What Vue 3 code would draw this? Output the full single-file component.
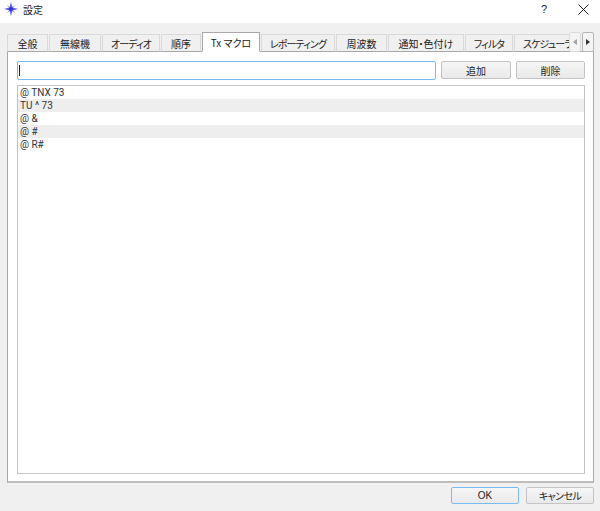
<script setup>
const tabs = [
  { label: '全般', w: 41 },
  { label: '無線機', w: 52 },
  { label: 'オーディオ', w: 58, kana: true },
  { label: '順序', w: 40 },
  { label: 'Tx マクロ', w: 58, active: true },
  { label: 'レポーティング', w: 74, kana: true },
  { label: '周波数', w: 51 },
  { label: '通知・色付け', w: 76 },
  { label: 'フィルタ', w: 48, kana: true },
  { label: 'スケジューラ', w: 62, clip: true, kana: true }
]
const rows = ['@ TNX 73', 'TU ^ 73', '@ &', '@ #', '@ R#']
</script>

<template>
  <div class="win">
    <header class="title">
      <svg class="logo" width="14" height="14" viewBox="0 0 16 16">
        <path d="M3 3 L8 6.5 L13 3 L9.5 8 L13 13 L8 9.5 L3 13 L6.5 8 Z" fill="#a8a8f4" />
        <path d="M8 0 L9.6 6.4 L16 8 L9.6 9.6 L8 16 L6.4 9.6 L0 8 L6.4 6.4 Z" fill="#5a5aec" />
        <circle cx="8" cy="8" r="2.2" fill="#3030e0" />
      </svg>
      <span class="title-text">設定</span>
      <span class="help">?</span>
      <svg class="close" width="11" height="11" viewBox="0 0 11 11">
        <path d="M.5 .5 L10.5 10.5 M10.5 .5 L.5 10.5" stroke="#222" stroke-width="1" fill="none" />
      </svg>
    </header>

    <main class="body">
      <div class="tabbar">
        <div class="tabs">
          <div
            v-for="t in tabs"
            :key="t.label"
            class="tab"
            :class="{ active: t.active, clip: t.clip, kana: t.kana }"
            :style="{ width: t.w + 'px' }"
          >{{ t.label }}</div>
        </div>
        <div class="scrollers">
          <div class="scroll dim"><i class="arrow left"></i></div>
          <div class="scroll"><i class="arrow right"></i></div>
        </div>
      </div>

      <section class="pane">
        <div class="entry">
          <div class="input"><span class="caret"></span></div>
          <button class="btn add">追加</button>
          <button class="btn del">削除</button>
        </div>
        <div class="list">
          <div v-for="(r, i) in rows" :key="i" class="row" :class="{ alt: i % 2 === 1 }">{{ r }}</div>
        </div>
      </section>

      <footer class="foot">
        <button class="btn ok">OK</button>
        <button class="btn cancel">キャンセル</button>
      </footer>
    </main>
  </div>
</template>

<style>
html, body { margin: 0; background: #f0f0f0; }
</style>

<style scoped>
.win {
  width: 600px;
  height: 511px;
  overflow: hidden;
  display: flex;
  flex-direction: column;
  font-family: "Noto Sans CJK JP", "Liberation Sans", sans-serif;
  font-size: 10px;
  font-feature-settings: "palt";
  color: #222;
}
.title {
  height: 23px;
  background: #fff;
  display: flex;
  align-items: center;
  padding: 0 0 5px 4px;
  box-sizing: border-box;
  flex: none;
}
.logo { flex: none; }
.title-text { margin-left: 5px; font-size: 10px; }
.help { margin-left: auto; font-size: 11px; font-family: "Liberation Sans", sans-serif; }
.close { margin: 0 11px 0 31px; }
.body {
  flex: 1;
  background: #f0f0f0;
  padding: 9px 6px 0 7px;
  display: flex;
  flex-direction: column;
}
.tabbar {
  height: 20px;
  position: relative;
  z-index: 1;
  flex: none;
  overflow: hidden;
}
.tabs {
  display: flex;
  gap: 1px;
  width: 562px;
  overflow: hidden;
  height: 20px;
  align-items: flex-end;
}
.tab {
  flex: none;
  height: 18px;
  box-sizing: border-box;
  background: #f0f0f0;
  border: 1px solid #d9d9d9;
  border-bottom: 1px solid #a8a8a8;
  display: flex;
  align-items: center;
  justify-content: center;
  white-space: nowrap;
  overflow: hidden;
}
.tab.kana { letter-spacing: -0.9px; }
.tab.clip {
  justify-content: flex-start;
  padding-left: 8px;
  border-right: 0;
}
.tab.active {
  height: 20px;
  background: #fff;
  border-color: #a8a8a8;
  border-bottom-color: #fff;
}
.scrollers {
  position: absolute;
  right: 0;
  top: 0;
  display: flex;
  gap: 1px;
}
.scroll {
  width: 12px;
  height: 20px;
  box-sizing: border-box;
  background: #f4f4f4;
  border: 1px solid #b8b8b8;
  border-radius: 2px;
  display: flex;
  align-items: center;
  justify-content: center;
}
.scroll.dim { border-color: #dcdcdc; }
.arrow { width: 0; height: 0; border-top: 3.5px solid transparent; border-bottom: 3.5px solid transparent; }
.arrow.left { border-right: 4px solid #a0a0a0; }
.arrow.right { border-left: 4px solid #333; }
.pane {
  height: 432px;
  box-sizing: border-box;
  background: #fff;
  border: 1px solid #a8a8a8;
  border-top: 0;
  border-bottom: 2px solid #bdbdbd;
  padding: 10px 8px 7px 9px;
  display: flex;
  flex-direction: column;
  margin-top: -1px;
  box-shadow: inset 0 1px 0 #a8a8a8;
}
.entry {
  display: flex;
  align-items: flex-start;
  height: 19px;
  flex: none;
}
.input {
  width: 419px;
  height: 19px;
  box-sizing: border-box;
  border: 1px solid #78bcf4;
  border-radius: 2px;
  display: flex;
  align-items: center;
  padding-left: 1px;
}
.caret { width: 1px; height: 11px; background: #222; }
.btn {
  box-sizing: border-box;
  height: 18px;
  border: 1px solid #c4c4c4;
  border-radius: 2px;
  background: linear-gradient(#f6f6f6, #e9e9e9);
  font: inherit;
  font-feature-settings: "palt";
  color: #222;
  padding: 0;
  display: flex;
  align-items: center;
  justify-content: center;
}
.add { width: 70px; margin-left: 5px; }
.del { width: 69px; margin-left: 5px; }
.list {
  margin-top: 5px;
  flex: 1;
  box-sizing: border-box;
  border: 1px solid #c4c4c4;
  background: #fff;
}
.row {
  height: 13px;
  line-height: 13px;
  padding-left: 2px;
  font-family: Roboto, sans-serif;
  font-size: 10px;
  color: #333;
}
.row.alt { background: #eeeeee; }
.foot {
  display: flex;
  justify-content: flex-end;
  gap: 7px;
  margin-top: 4px;
}
.foot .btn { height: 17px; }
.ok { width: 68px; border-color: #78bcf4; font-family: "Liberation Sans", sans-serif; }
.cancel { width: 68px; letter-spacing: -0.6px; }
</style>
